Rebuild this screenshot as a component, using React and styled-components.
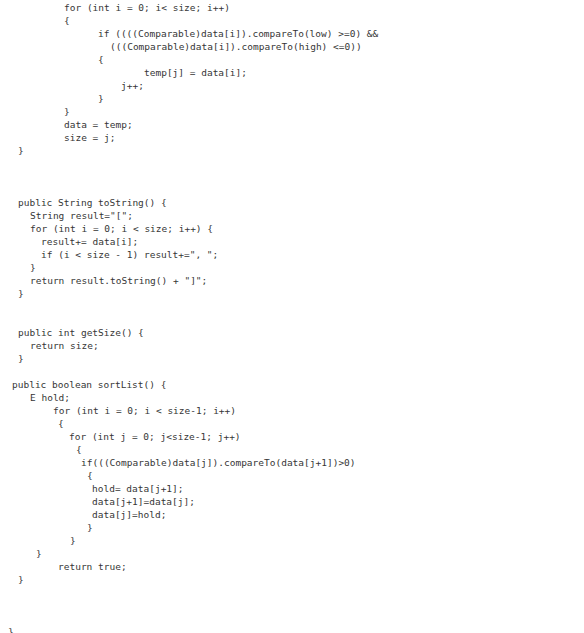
import React from 'react';
import styled, { createGlobalStyle } from 'styled-components';

const GlobalStyle = createGlobalStyle`
  html, body {
    margin: 0;
    padding: 0;
    background: #ffffff;
  }
`;

const Listing = styled.div`
  display: flex;
  flex-direction: column;
  width: 584px;
  height: 633px;
  padding-top: 0.5px;
  box-sizing: border-box;
  overflow: hidden;
  font-family: 'DejaVu Sans Mono', 'Liberation Mono', monospace;
  font-size: 9.5px;
  color: #363636;
`;

const Line = styled.div`
  flex: none;
  height: 13.03px;
  line-height: 13.03px;
  white-space: pre;
  padding-left: ${(p) => p.indent || 0}px;
`;

const lines = [
  [64, 'for (int i = 0; i< size; i++)'],
  [64, '{'],
  [98, 'if ((((Comparable)data[i]).compareTo(low) >=0) &&'],
  [110, '(((Comparable)data[i]).compareTo(high) <=0))'],
  [98, '{'],
  [144, 'temp[j] = data[i];'],
  [121, 'j++;'],
  [98, '}'],
  [64, '}'],
  [64, 'data = temp;'],
  [64, 'size = j;'],
  [18, '}'],
  [0, ''],
  [0, ''],
  [0, ''],
  [18, 'public String toString() {'],
  [30, 'String result="[";'],
  [30, 'for (int i = 0; i < size; i++) {'],
  [41, 'result+= data[i];'],
  [41, 'if (i < size - 1) result+=", ";'],
  [30, '}'],
  [30, 'return result.toString() + "]";'],
  [18, '}'],
  [0, ''],
  [0, ''],
  [18, 'public int getSize() {'],
  [30, 'return size;'],
  [18, '}'],
  [0, ''],
  [12, 'public boolean sortList() {'],
  [30, 'E hold;'],
  [53, 'for (int i = 0; i < size-1; i++)'],
  [58, '{'],
  [69, 'for (int j = 0; j<size-1; j++)'],
  [76, '{'],
  [81, 'if(((Comparable)data[j]).compareTo(data[j+1])>0)'],
  [87, '{'],
  [92, 'hold= data[j+1];'],
  [92, 'data[j+1]=data[j];'],
  [92, 'data[j]=hold;'],
  [87, '}'],
  [70, '}'],
  [36, '}'],
  [58, 'return true;'],
  [18, '}'],
  [0, ''],
  [0, ''],
  [0, ''],
  [8, '}'],
];

const App = () => (
  <>
    <GlobalStyle />
    <Listing>
      {lines.map(([indent, text], i) => (
        <Line key={i} indent={indent}>
          {text}
        </Line>
      ))}
    </Listing>
  </>
);

export default App;
